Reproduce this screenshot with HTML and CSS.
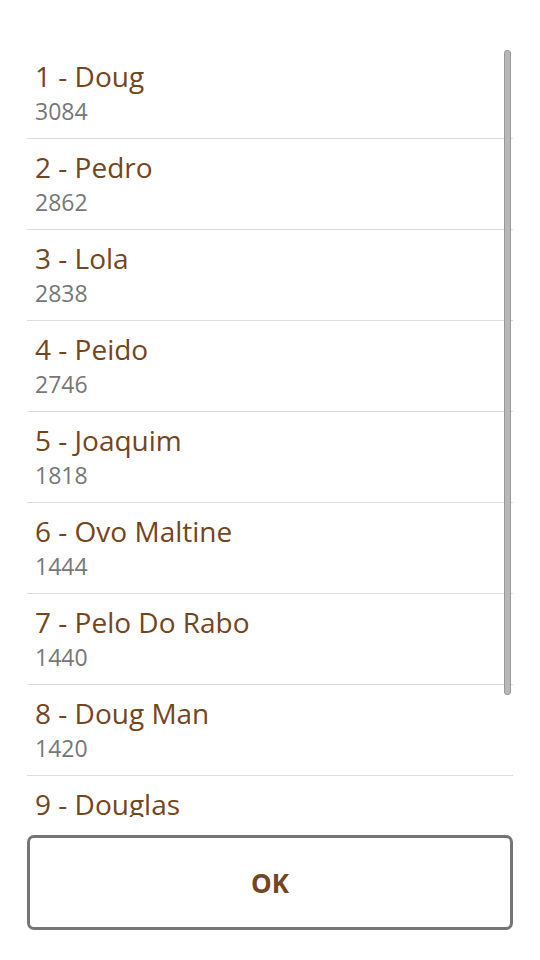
FILE: index.html
```html
<!DOCTYPE html>
<html lang="en">
<head>
    <meta charset="UTF-8">
    <meta name="viewport" content="width=device-width, initial-scale=1.0">
    <title>Ranking</title>
    <link rel="stylesheet" href="styles.css">
</head>
<body>
    <div class="dialog">
        <div class="list-wrap">
            <ul class="score-list">
                <li class="score-row"><span class="name">1 - Doug</span><span class="points">3084</span></li>
                <li class="score-row"><span class="name">2 - Pedro</span><span class="points">2862</span></li>
                <li class="score-row"><span class="name">3 - Lola</span><span class="points">2838</span></li>
                <li class="score-row"><span class="name">4 - Peido</span><span class="points">2746</span></li>
                <li class="score-row"><span class="name">5 - Joaquim</span><span class="points">1818</span></li>
                <li class="score-row"><span class="name">6 - Ovo Maltine</span><span class="points">1444</span></li>
                <li class="score-row"><span class="name">7 - Pelo Do Rabo</span><span class="points">1440</span></li>
                <li class="score-row"><span class="name">8 - Doug Man</span><span class="points">1420</span></li>
                <li class="score-row"><span class="name">9 - Douglas</span><span class="points">1210</span></li>
            </ul>
            <div class="scrollbar"></div>
        </div>
        <button type="button" class="ok-button">OK</button>
    </div>
</body>
</html>
```

FILE: styles.css
```css
body {
    margin: 0;
    padding: 0;
    background-color: #fff;
    font-family: 'Open Sans', 'Noto Sans', sans-serif;
}

.dialog {
    height: 960px;
    box-sizing: border-box;
    padding: 48px 27px 30px;
    display: flex;
    flex-direction: column;
}

.list-wrap {
    position: relative;
    height: 769px;
    overflow: hidden;
}

.score-list {
    list-style: none;
    margin: 0;
    padding: 0;
}

.score-row {
    height: 90px;
    border-bottom: 1px solid #dcdcdc;
    padding-left: 8px;
    display: flex;
    flex-direction: column;
}

.name {
    margin-top: 11px;
    font-size: 28px;
    line-height: 35px;
    color: #744520;
}

.points {
    margin-top: 4px;
    font-size: 23px;
    line-height: 27px;
    color: #777;
}

.scrollbar {
    position: absolute;
    top: 2px;
    right: 2px;
    width: 5px;
    height: 643px;
    background-color: #b8b8b8;
    border: 1px solid #999;
    border-radius: 3px;
}

.ok-button {
    margin-top: 18px;
    height: 95px;
    background-color: #fff;
    border: 3px solid #757575;
    border-radius: 7px;
    font-family: 'Open Sans', 'Noto Sans', sans-serif;
    font-size: 26px;
    font-weight: bold;
    color: #744520;
    cursor: pointer;
}
```
